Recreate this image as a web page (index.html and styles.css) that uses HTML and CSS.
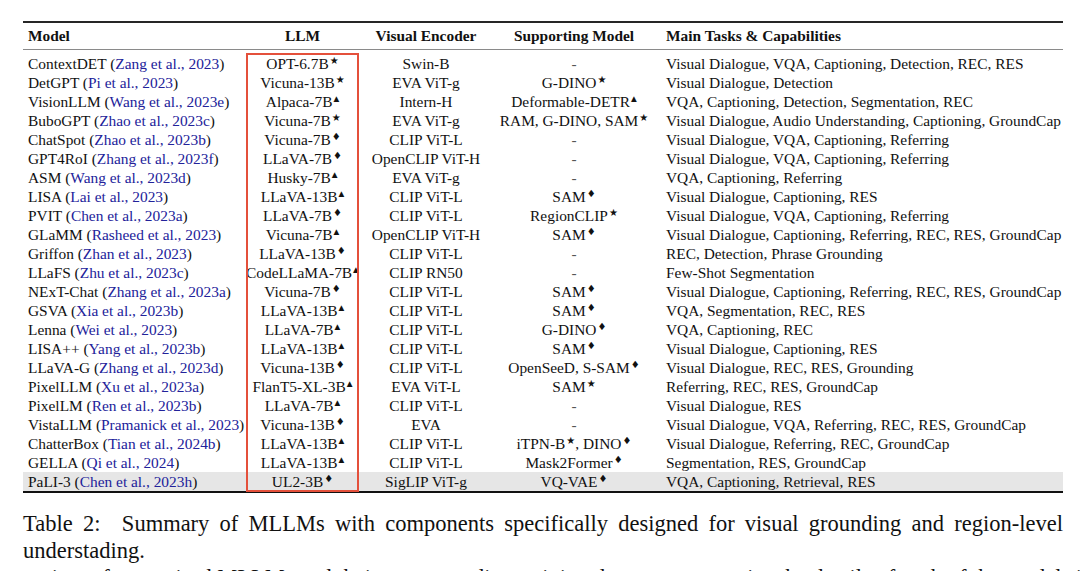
FILE: index.html
```html
<!DOCTYPE html>
<html>
<head>
<meta charset="utf-8">
<link rel="stylesheet" href="styles.css">
</head>
<body>
<div class="page">
  <div class="tablewrap">
    <table class="mtable">
      <colgroup>
        <col class="c-model"><col class="c-llm"><col class="c-ve"><col class="c-sm"><col class="c-task">
      </colgroup>
      <thead>
        <tr><th class="l">Model</th><th>LLM</th><th>Visual Encoder</th><th>Supporting Model</th><th class="t">Main Tasks &amp; Capabilities</th></tr>
      </thead>
      <tbody>
        <tr><td class="l">ContextDET (<a>Zang et al., 2023</a>)</td><td>OPT-6.7B<sup>★</sup></td><td>Swin-B</td><td><span class="dash">-</span></td><td class="t">Visual Dialogue, VQA, Captioning, Detection, REC, RES</td></tr>
        <tr><td class="l">DetGPT (<a>Pi et al., 2023</a>)</td><td>Vicuna-13B<sup>★</sup></td><td>EVA ViT-g</td><td>G-DINO<sup>★</sup></td><td class="t">Visual Dialogue, Detection</td></tr>
        <tr><td class="l">VisionLLM (<a>Wang et al., 2023e</a>)</td><td>Alpaca-7B<sup class="tri">▲</sup></td><td>Intern-H</td><td>Deformable-DETR<sup class="tri">▲</sup></td><td class="t">VQA, Captioning, Detection, Segmentation, REC</td></tr>
        <tr><td class="l">BuboGPT (<a>Zhao et al., 2023c</a>)</td><td>Vicuna-7B<sup>★</sup></td><td>EVA ViT-g</td><td>RAM, G-DINO, SAM<sup>★</sup></td><td class="t">Visual Dialogue, Audio Understanding, Captioning, GroundCap</td></tr>
        <tr><td class="l">ChatSpot (<a>Zhao et al., 2023b</a>)</td><td>Vicuna-7B<sup>♦</sup></td><td>CLIP ViT-L</td><td><span class="dash">-</span></td><td class="t">Visual Dialogue, VQA, Captioning, Referring</td></tr>
        <tr><td class="l">GPT4RoI (<a>Zhang et al., 2023f</a>)</td><td>LLaVA-7B<sup>♦</sup></td><td>OpenCLIP ViT-H</td><td><span class="dash">-</span></td><td class="t">Visual Dialogue, VQA, Captioning, Referring</td></tr>
        <tr><td class="l">ASM (<a>Wang et al., 2023d</a>)</td><td>Husky-7B<sup class="tri">▲</sup></td><td>EVA ViT-g</td><td><span class="dash">-</span></td><td class="t">VQA, Captioning, Referring</td></tr>
        <tr><td class="l">LISA (<a>Lai et al., 2023</a>)</td><td>LLaVA-13B<sup class="tri">▲</sup></td><td>CLIP ViT-L</td><td>SAM<sup>♦</sup></td><td class="t">Visual Dialogue, Captioning, RES</td></tr>
        <tr><td class="l">PVIT (<a>Chen et al., 2023a</a>)</td><td>LLaVA-7B<sup>♦</sup></td><td>CLIP ViT-L</td><td>RegionCLIP<sup>★</sup></td><td class="t">Visual Dialogue, VQA, Captioning, Referring</td></tr>
        <tr><td class="l">GLaMM (<a>Rasheed et al., 2023</a>)</td><td>Vicuna-7B<sup class="tri">▲</sup></td><td>OpenCLIP ViT-H</td><td>SAM<sup>♦</sup></td><td class="t">Visual Dialogue, Captioning, Referring, REC, RES, GroundCap</td></tr>
        <tr><td class="l">Griffon (<a>Zhan et al., 2023</a>)</td><td>LLaVA-13B<sup>♦</sup></td><td>CLIP ViT-L</td><td><span class="dash">-</span></td><td class="t">REC, Detection, Phrase Grounding</td></tr>
        <tr><td class="l">LLaFS (<a>Zhu et al., 2023c</a>)</td><td>CodeLLaMA-7B<sup class="tri">▲</sup></td><td>CLIP RN50</td><td><span class="dash">-</span></td><td class="t">Few-Shot Segmentation</td></tr>
        <tr><td class="l">NExT-Chat (<a>Zhang et al., 2023a</a>)</td><td>Vicuna-7B<sup>♦</sup></td><td>CLIP ViT-L</td><td>SAM<sup>♦</sup></td><td class="t">Visual Dialogue, Captioning, Referring, REC, RES, GroundCap</td></tr>
        <tr><td class="l">GSVA (<a>Xia et al., 2023b</a>)</td><td>LLaVA-13B<sup class="tri">▲</sup></td><td>CLIP ViT-L</td><td>SAM<sup>♦</sup></td><td class="t">VQA, Segmentation, REC, RES</td></tr>
        <tr><td class="l">Lenna (<a>Wei et al., 2023</a>)</td><td>LLaVA-7B<sup class="tri">▲</sup></td><td>CLIP ViT-L</td><td>G-DINO<sup>♦</sup></td><td class="t">VQA, Captioning, REC</td></tr>
        <tr><td class="l">LISA++ (<a>Yang et al., 2023b</a>)</td><td>LLaVA-13B<sup class="tri">▲</sup></td><td>CLIP ViT-L</td><td>SAM<sup>♦</sup></td><td class="t">Visual Dialogue, Captioning, RES</td></tr>
        <tr><td class="l">LLaVA-G (<a>Zhang et al., 2023d</a>)</td><td>Vicuna-13B<sup>♦</sup></td><td>CLIP ViT-L</td><td>OpenSeeD, S-SAM<sup>♦</sup></td><td class="t">Visual Dialogue, REC, RES, Grounding</td></tr>
        <tr><td class="l">PixelLLM (<a>Xu et al., 2023a</a>)</td><td>FlanT5-XL-3B<sup class="tri">▲</sup></td><td>EVA ViT-L</td><td>SAM<sup>★</sup></td><td class="t">Referring, REC, RES, GroundCap</td></tr>
        <tr><td class="l">PixelLM (<a>Ren et al., 2023b</a>)</td><td>LLaVA-7B<sup class="tri">▲</sup></td><td>CLIP ViT-L</td><td><span class="dash">-</span></td><td class="t">Visual Dialogue, RES</td></tr>
        <tr><td class="l">VistaLLM (<a>Pramanick et al., 2023</a>)</td><td>Vicuna-13B<sup>♦</sup></td><td>EVA</td><td><span class="dash">-</span></td><td class="t">Visual Dialogue, VQA, Referring, REC, RES, GroundCap</td></tr>
        <tr><td class="l">ChatterBox (<a>Tian et al., 2024b</a>)</td><td>LLaVA-13B<sup class="tri">▲</sup></td><td>CLIP ViT-L</td><td>iTPN-B<sup>★</sup>, DINO<sup>♦</sup></td><td class="t">Visual Dialogue, Referring, REC, GroundCap</td></tr>
        <tr><td class="l">GELLA (<a>Qi et al., 2024</a>)</td><td>LLaVA-13B<sup class="tri">▲</sup></td><td>CLIP ViT-L</td><td>Mask2Former<sup>♦</sup></td><td class="t">Segmentation, RES, GroundCap</td></tr>
        <tr class="hl"><td class="l">PaLI-3 (<a>Chen et al., 2023h</a>)</td><td>UL2-3B<sup>♦</sup></td><td>SigLIP ViT-g</td><td>VQ-VAE<sup>♦</sup></td><td class="t">VQA, Captioning, Retrieval, RES</td></tr>
      </tbody>
    </table>
    <div class="redbox"></div>
  </div>
  <p class="caption">Table 2:&ensp; Summary of MLLMs with components specifically designed for visual grounding and region-level understading.</p>
  <p class="body">variety of supervised MLLMs and their corresponding training data, we summarize the details of each of the models in</p>
</div>
</body>
</html>
```
FILE: styles.css
```css
html, body {
  margin: 0;
  padding: 0;
  background: #ffffff;
}
body {
  font-family: "Liberation Serif", "Times New Roman", serif;
  color: #111111;
  overflow: hidden;
}
.page {
  padding: 21px 17px 0 23px;
}
.tablewrap {
  position: relative;
  width: 1040px;
}
.mtable {
  width: 1040px;
  border-collapse: collapse;
  table-layout: fixed;
  font-size: 15.4px;
}
.c-model { width: 223px; }
.c-llm { width: 113px; }
.c-ve { width: 134px; }
.c-sm { width: 162px; }
.c-task { width: 408px; }

.mtable th {
  font-weight: bold;
  height: 26px;
  padding: 0;
  text-align: center;
  vertical-align: middle;
  border-top: 2px solid #262626;
  border-bottom: 1px solid #8a8a8a;
  white-space: nowrap;
}
.mtable td {
  padding: 0;
  height: 19px;
  line-height: 19px;
  text-align: center;
  white-space: nowrap;
}
.mtable tbody tr:first-child td {
  padding-top: 4px;
}
.mtable .l {
  text-align: left;
  padding-left: 5px;
}
.mtable .t {
  text-align: left;
  padding-left: 11px;
}
.mtable tr.hl td {
  background: #e6e6e6;
  border-bottom: 2px solid #111111;
}
.mtable a {
  color: #22229a;
  text-decoration: none;
}
.mtable sup {
  font-family: "DejaVu Sans", sans-serif;
  font-size: 10px;
  vertical-align: 5px;
  line-height: 0;
  margin-left: 1px;
}
.mtable sup.tri {
  font-size: 7.5px;
  vertical-align: 6px;
}
.dash {
  color: #555555;
}
.redbox {
  position: absolute;
  left: 223px;
  top: 32px;
  width: 113px;
  height: 439px;
  box-sizing: border-box;
  border: 2px solid #e4503b;
  pointer-events: none;
}
.caption {
  margin: 17px 0 0 0;
  font-size: 22.5px;
  line-height: 27px;
  text-align: justify;
  width: 1040px;
}
.body {
  margin: 0;
  font-size: 22.5px;
  line-height: 28px;
  width: 1040px;
  white-space: nowrap;
}
```
